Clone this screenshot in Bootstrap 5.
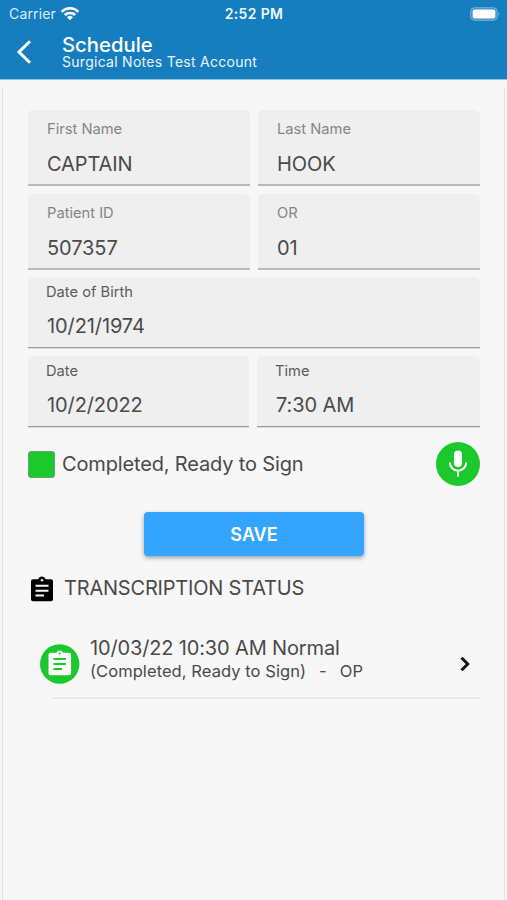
<!DOCTYPE html>
<html lang="en">
<head>
<meta charset="utf-8">
<meta name="viewport" content="width=device-width, initial-scale=1">
<title>Schedule</title>
<link href="https://cdn.jsdelivr.net/npm/bootstrap@5.3.0/dist/css/bootstrap.min.css" rel="stylesheet">
<style>
body{font-family:Inter,"Liberation Sans",sans-serif;background:#f7f7f7;color:#4a4a4a;height:900px;overflow:hidden}
svg{display:block;flex:none}
.text-line{white-space:nowrap;line-height:1}
.topbar{background:#167dbe;height:80px;border-bottom:1px solid #8fc3e2}
.status-bar{height:27px;padding:0 6px 0 9px;font-size:14px;color:#d9ecf7}
.status-bar>*{flex:1 1 0}
.carrier{letter-spacing:.15px}
.clock{font-size:14px;font-weight:600;letter-spacing:.35px;color:#eef7fc;margin-left:-2px}
.title-bar{padding:9px 0 0 16px}
.titles{margin-left:30px}
.app-title{font-size:20.3px;font-weight:500;line-height:18px}
.app-sub{font-size:14px;letter-spacing:.28px;line-height:15px;color:#eaf5fb}
.sheet{height:813px;margin:7px 2px 0;border:1px solid #e3e3e3;border-width:0 1px;padding:23px 24px 0 25px}
.field{background:#efefef;border-bottom:2px solid #bababa;border-radius:5px 5px 0 0;height:76px;padding:12px 0 0 19px}
.field-label{font-size:14.7px;color:#858585}
.field-value{font-size:20px;margin-top:17px;letter-spacing:-.1px}
.picker{height:71px;padding:8px 0 0 18px;border-bottom:1px solid #989c9a;box-shadow:0 1px 0 #dcdcdc}
.picker .field-label{font-size:14.7px;color:#5c5c5c}
.picker .field-value{margin:16px 0 0 1px}
.birth{margin-top:7px}
.fields{display:grid;grid-template-columns:1fr 1fr;gap:8px}
.when{grid-template-columns:221px 1fr}
.status-row{margin-top:15px;height:44px}
.check{width:27px;height:27px;background:#1bc92d;border:1px solid #64a66a;border-radius:3px;margin-right:7px}
.heading-line{font-size:20px;letter-spacing:-.15px}
.save{width:220px;height:44px;margin:26px auto 0;background:#33a5ff;border-radius:4px;font-size:18px;font-weight:600;box-shadow:0 2px 4px rgba(40,60,80,.45)}
.section-head{margin-top:20px;height:26px;padding-left:2px}
.section-title{margin-left:10px;margin-top:-2px;letter-spacing:-.2px}
.entry{margin-top:42px;height:40px;padding-left:12px}
.entry-text{margin:-10px 0 0 10px}
.entry-sub{font-size:16.5px;letter-spacing:.07px;margin-top:5px}
.entry-sub span{margin-left:13px}
.next{margin-right:9px}
.rule{height:2px;background:#eaeaea;margin:13px 0 0 24px}
</style>
</head>
<body>
<header class="topbar text-white">
  <div class="status-bar d-flex align-items-center">
    <div class="d-flex align-items-center">
      <span class="text-line carrier">Carrier</span>
      <svg class="ms-1" width="20" height="15" viewBox="0 0 20 15" fill="none" stroke="#fff" stroke-width="2.5"><path d="M1.6 5.8a12 12 0 0 1 16.8 0M4.8 9a7.5 7.5 0 0 1 10.4 0"/><path d="M10 14.2 7 11.3a4.3 4.3 0 0 1 6 0z" fill="#fff" stroke="none"/></svg>
    </div>
    <div class="text-line clock text-center">2:52 PM</div>
    <div class="d-flex justify-content-end">
      <svg width="31" height="14" viewBox="0 0 31 14"><rect x=".7" y=".7" width="26.6" height="12.6" rx="3.8" fill="#3d94ca" stroke="#73b3db"/><rect x="2.7" y="2.4" width="22.6" height="9.2" rx="2" fill="#fff"/><path d="M28.7 4.8q1.8 2.2 0 4.4z" fill="#8fc3e3"/></svg>
    </div>
  </div>
  <div class="title-bar d-flex align-items-start">
    <svg class="mt-1" width="16" height="24" viewBox="0 0 16 24" fill="none" stroke="#fff" stroke-width="3"><path d="M14 1.2 3 12l11 10.8"/></svg>
    <div class="titles d-flex flex-column">
      <div class="text-line app-title">Schedule</div>
      <div class="text-line app-sub">Surgical Notes Test Account</div>
    </div>
  </div>
</header>
<main class="sheet">
  <div class="fields">
    <div class="field"><div class="text-line field-label">First Name</div><div class="text-line field-value">CAPTAIN</div></div>
    <div class="field"><div class="text-line field-label">Last Name</div><div class="text-line field-value">HOOK</div></div>
    <div class="field"><div class="text-line field-label">Patient ID</div><div class="text-line field-value">507357</div></div>
    <div class="field"><div class="text-line field-label">OR</div><div class="text-line field-value">01</div></div>
  </div>
  <div class="field picker birth"><div class="text-line field-label">Date of Birth</div><div class="text-line field-value">10/21/1974</div></div>
  <div class="fields when mt-2">
    <div class="field picker"><div class="text-line field-label">Date</div><div class="text-line field-value">10/2/2022</div></div>
    <div class="field picker"><div class="text-line field-label">Time</div><div class="text-line field-value">7:30 AM</div></div>
  </div>
  <div class="status-row d-flex align-items-center">
    <span class="check"></span>
    <span class="text-line heading-line">Completed, Ready to Sign</span>
    <svg class="ms-auto" width="44" height="44" viewBox="0 0 44 44"><circle cx="22" cy="22" r="22" fill="#1bc92d"/><rect x="18" y="8.5" width="8" height="16.5" rx="4" fill="#fff"/><path d="M13.8 20.5a8.2 8.2 0 0 0 16.4 0M22 28.5v6" fill="none" stroke="#fff" stroke-width="2"/></svg>
  </div>
  <button class="save btn d-flex align-items-center justify-content-center p-0 border-0 text-white">SAVE</button>
  <div class="section-head d-flex align-items-center">
    <svg width="24" height="26" viewBox="0 0 24 26"><path d="M3 3.300h5.200a4 4 0 0 1 7.600 0H21a2 2 0 0 1 2 2v18a2 2 0 0 1-2 2H3a2 2 0 0 1-2-2v-18a2 2 0 0 1 2-2z" fill="#000"/><circle cx="12" cy="4.300" r="1.200" fill="#f7f7f7"/><path d="M5.500 9.800h13M5.500 14.700h13M5.500 19.600h8.500" stroke="#f7f7f7" stroke-width="2"/></svg>
    <span class="text-line heading-line section-title">TRANSCRIPTION STATUS</span>
  </div>
  <div class="entry d-flex align-items-center">
    <svg width="40" height="40" viewBox="0 0 40 40"><circle cx="19.700" cy="20" r="19.700" fill="#1bc92d"/><path d="M10.500 8.700h6a3.600 3.600 0 0 1 6.600 0h6a2 2 0 0 1 2 2v18.600a2 2 0 0 1-2 2H10.500a2 2 0 0 1-2-2V10.700a2 2 0 0 1 2-2z" fill="#fff"/><circle cx="19.800" cy="9.600" r="1.100" fill="#1bc92d"/><path d="M13.500 15h12.500M13.500 20h12.500M13.500 25h8.500" stroke="#1bc92d" stroke-width="2"/></svg>
    <div class="entry-text">
      <div class="text-line heading-line">10/03/22 10:30 AM Normal</div>
      <div class="text-line entry-sub">(Completed, Ready to Sign)<span>-</span><span>OP</span></div>
    </div>
    <svg class="ms-auto next" width="12" height="16" viewBox="0 0 12 16" fill="none" stroke="#111" stroke-width="3"><path d="M2.500 1.800 8.700 8l-6.200 6.200"/></svg>
  </div>
  <div class="rule"></div>
</main>
<script src="https://cdn.jsdelivr.net/npm/bootstrap@5.3.0/dist/js/bootstrap.bundle.min.js"></script>
</body>
</html>
